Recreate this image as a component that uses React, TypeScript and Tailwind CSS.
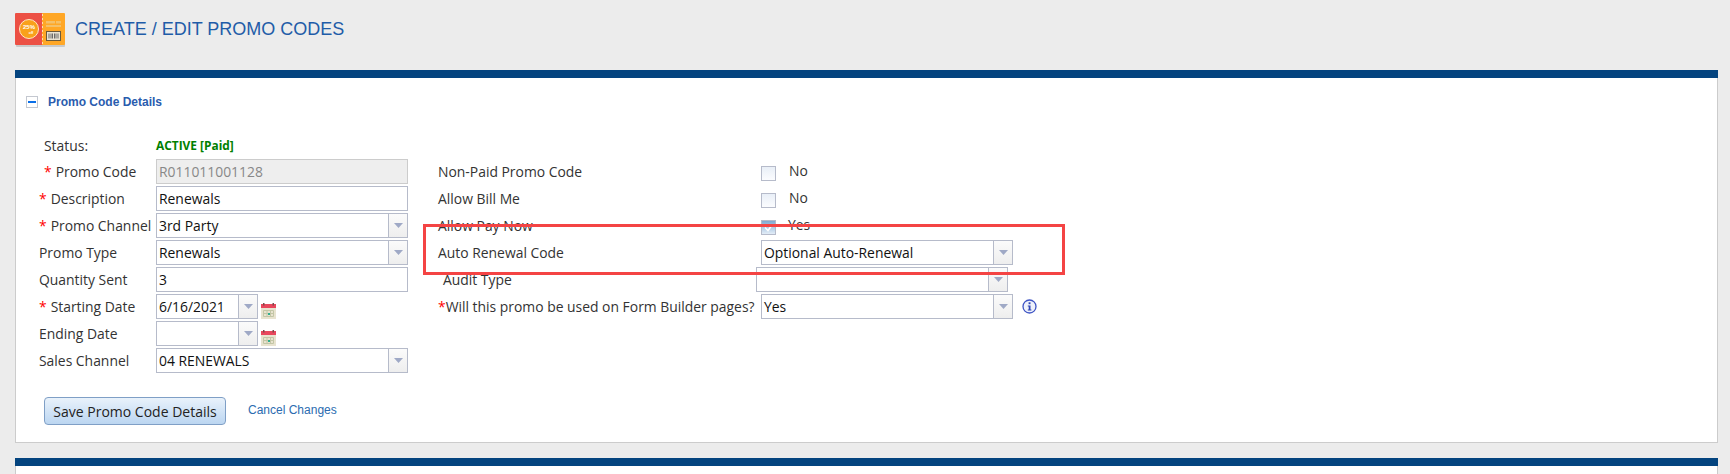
import React from 'react';

const FONT = "font-['Open_Sans',sans-serif]";

function TicketLogo() {
  return (
    <svg width="50" height="34" viewBox="0 0 50 34">
      <rect x="1" y="2" width="49" height="32" rx="1" fill="#c9c9c9" />
      <path d="M1 0H27V32H1a1 1 0 0 1-1-1V1a1 1 0 0 1 1-1z" fill="#ec5044" />
      <path d="M27 0H49a1 1 0 0 1 1 1V31a1 1 0 0 1-1 1H27z" fill="#ffa726" />
      <path d="M27.500 1V32" stroke="#ffe0b0" strokeWidth="1" strokeDasharray="2 2" />
      <circle cx="14" cy="16" r="9.500" fill="#f9a11b" stroke="#ffe6c4" strokeWidth="1" />
      <text x="14" y="16" fontSize="6" fontWeight="700" fill="#fff" textAnchor="middle" fontFamily="Liberation Sans">25%</text>
      <text x="16" y="21" fontSize="3.500" fontWeight="700" fill="#fff" textAnchor="middle" fontFamily="Liberation Sans">off</text>
      <rect x="31" y="8" width="9" height="2.500" fill="#f4c069" />
      <rect x="41" y="8" width="5" height="2.500" fill="#f4c069" />
      <rect x="31" y="12" width="15" height="2" fill="#f4c069" />
      <rect x="31.500" y="18.500" width="14" height="9" fill="#e8e2d2" stroke="#6b5a3a" />
      <path d="M34 20.500v5M36 20.500v5M37.500 20.500v5M39.500 20.500v5M41 20.500v5M43 20.500v5" stroke="#6a6a6a" strokeWidth="1" />
    </svg>
  );
}

function CalendarIcon() {
  return (
    <svg width="15" height="16" viewBox="0 0 15 16" className="mt-[9px] ml-[3px]">
      <rect x="0" y="1" width="15" height="15" fill="#e8e3cf" />
      <rect x="0" y="1" width="15" height="4" fill="#e8475c" />
      <rect x="2" y="0" width="1.500" height="2.500" fill="#7a4a4a" />
      <rect x="11.500" y="0" width="1.500" height="2.500" fill="#7a4a4a" />
      <path d="M2.500 7.500h10v6h-10zM2.500 10.500h10M6 7.500v6M9.500 7.500v6" fill="none" stroke="#c3c6a6" strokeWidth="1" />
      <rect x="7" y="10" width="2" height="2" fill="#2fae8e" />
    </svg>
  );
}

function Arrow() {
  return (
    <div className="w-[19px] h-full shrink-0 flex items-center justify-center border-l border-[#b6bbca] bg-gradient-to-b from-[#fbfbfb] to-[#eeeeee]">
      <svg width="9" height="5" viewBox="0 0 9 5">
        <path d="M0 0H9L4.500 5z" fill="#9fa9c6" />
      </svg>
    </div>
  );
}

function Combo({ value, className = 'w-[252px]' }: { value: string; className?: string }) {
  return (
    <div className={`h-[25px] flex border border-[#b6bbca] bg-white ${className}`}>
      <div className="flex-1 pl-[2px] leading-[23px] text-[#111] overflow-hidden whitespace-nowrap">{value}</div>
      <Arrow />
    </div>
  );
}

function TextBox({ value, disabled }: { value: string; disabled?: boolean }) {
  return (
    <div
      className={`w-[252px] h-[25px] border pl-[2px] leading-[23px] ${
        disabled ? 'bg-[#eeeeee] border-[#cccccc] text-[#888]' : 'bg-white border-[#b6bbca] text-[#111]'
      }`}
    >
      {value}
    </div>
  );
}

function Label({ text, required, indent = '' }: { text: string; required?: boolean; indent?: string }) {
  return (
    <div className={`leading-[25px] whitespace-nowrap text-[#333] ${indent}`}>
      {required && <span className="text-[#f00] mr-[4px]">*</span>}
      {text}
    </div>
  );
}

function CheckRow({ label, value, checked }: { label: string; value: string; checked?: boolean }) {
  return (
    <>
      <Label text={label} />
      <div className="flex items-center h-[25px] text-[#333]">
        <div
          className={`w-[15px] h-[15px] mt-[4px] border border-[#b6bbca] flex items-center justify-center bg-gradient-to-b ${
            checked ? 'from-[#7fa9d2] to-[#e3edf7]' : 'from-[#e9eff7] to-[#fbfcfe]'
          }`}
        >
          {checked && (
            <svg width="13" height="13" viewBox="0 0 13 13">
              <path d="M3 6.500l3 3 4.500-6" fill="none" stroke="#fff" strokeWidth="1.500" />
            </svg>
          )}
        </div>
        <span className={checked ? 'ml-[12px]' : 'ml-[13px]'}>{value}</span>
      </div>
    </>
  );
}

export default function App() {
  return (
    <div className={`${FONT} relative h-[474px] overflow-hidden bg-[#ececec] text-[13.9px]`}>
      <div className="flex items-center h-[70px] pl-[15px] pb-[11px]">
        <TicketLogo />
        <h1 className="ml-[10px] font-['Liberation_Sans',sans-serif] text-[18px] text-[#1f5ca8]">CREATE / EDIT PROMO CODES</h1>
      </div>

      <section className="ml-[15px] mr-[12px] bg-white border-x border-b border-[#cccccc]">
        <div className="h-[8px] -mx-px bg-[#04447f]" />
        <div className="flex items-center h-[47px] pl-[10px] pt-[1px]">
          <div className="w-[12px] h-[12px] border border-[#c4c8d0] bg-white flex items-center justify-center">
            <div className="w-[8px] h-[2px] bg-[#0a6fe8]" />
          </div>
          <span className="ml-[10px] font-['Liberation_Sans',sans-serif] font-bold text-[12px] text-[#2a5cae]">Promo Code Details</span>
        </div>

        <div className="flex items-start pt-[10px] pl-[23px]">
          <div className="grid grid-cols-[117px_252px] grid-rows-[22px] auto-rows-[25px] gap-y-[2px]">
            <div className="pl-[5px] leading-[21px] text-[#333]">Status:</div>
            <div className="leading-[21px] font-bold text-[11.900px] text-[#008000]">ACTIVE [Paid]</div>

            <Label text="Promo Code" required indent="pl-[5px]" />
            <TextBox value="R011011001128" disabled />
            <Label text="Description" required />
            <TextBox value="Renewals" />
            <Label text="Promo Channel" required />
            <Combo value="3rd Party" />
            <Label text="Promo Type" />
            <Combo value="Renewals" />
            <Label text="Quantity Sent" />
            <TextBox value="3" />
            <Label text="Starting Date" required />
            <div className="flex">
              <Combo value="6/16/2021" className="w-[102px]" />
              <CalendarIcon />
            </div>
            <Label text="Ending Date" />
            <div className="flex">
              <Combo value="" className="w-[102px]" />
              <CalendarIcon />
            </div>
            <Label text="Sales Channel" />
            <Combo value="04 RENEWALS" />
          </div>

          <div className="ml-[30px] grid grid-cols-[323px_1fr] grid-rows-[22px] auto-rows-[25px] gap-y-[2px]">
            <div className="col-span-2" />
            <CheckRow label="Non-Paid Promo Code" value="No" />
            <CheckRow label="Allow Bill Me" value="No" />
            <CheckRow label="Allow Pay Now" value="Yes" checked />
            <Label text="Auto Renewal Code" />
            <Combo value="Optional Auto-Renewal" />
            <Label text="Audit Type" indent="pl-[5px]" />
            <Combo value="" className="w-[252px] -ml-[5px]" />
            <div className="leading-[25px] whitespace-nowrap text-[#333]">
              <span className="text-[#f00]">*</span>Will this promo be used on Form Builder pages?
            </div>
            <div className="flex items-center">
              <Combo value="Yes" />
              <svg width="15" height="15" viewBox="0 0 15 15" className="ml-[9px]">
                <circle cx="7.500" cy="7.500" r="6.500" fill="#eef1fb" stroke="#3f55c4" strokeWidth="1.300" />
                <rect x="6.600" y="3.300" width="1.900" height="1.900" fill="#2f45b4" />
                <path d="M5.800 6.400H8.500V10.600H9.400V11.600H5.800V10.600H6.700V7.400H5.800z" fill="#2f45b4" />
              </svg>
            </div>
          </div>
        </div>

        <div className="flex items-center mt-[24px] pl-[28px] pb-[17px]">
          <button className="w-[182px] h-[28px] border border-[#7f9fc6] rounded-[4px] bg-gradient-to-b from-[#e9f2fb] to-[#bcd6f1] text-[14px] text-[#222]">
            Save Promo Code Details
          </button>
          <a className="ml-[22px] -mt-[2px] font-['Liberation_Sans',sans-serif] text-[12px] text-[#2b6cb0]">Cancel Changes</a>
        </div>
      </section>

      <section className="mt-[15px] ml-[15px] mr-[12px] h-[40px] bg-white border-x border-[#cccccc]">
        <div className="h-[8px] -mx-px bg-[#04447f]" />
      </section>

      <div className="absolute left-[423px] top-[224px] w-[642px] h-[51px] border-[3px] border-[#f44444]" />
    </div>
  );
}
